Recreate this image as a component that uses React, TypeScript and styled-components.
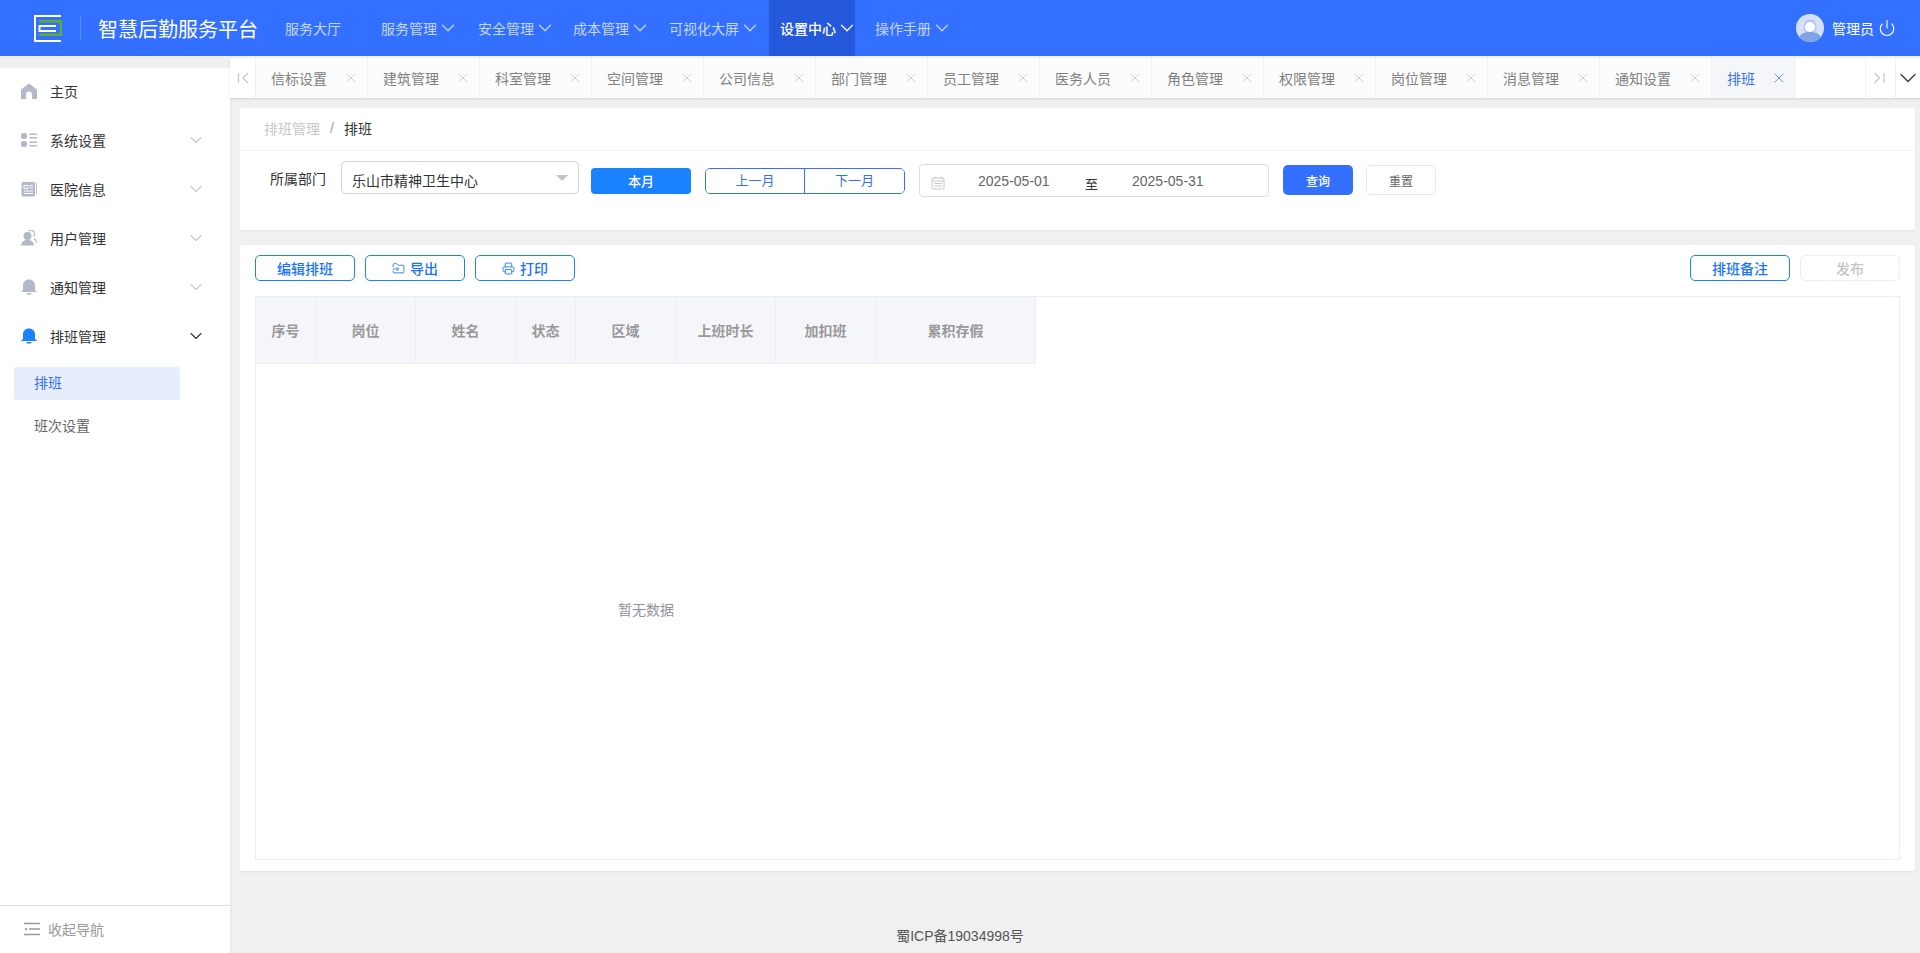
import React from "react";
import styled, { createGlobalStyle } from "styled-components";
import { ChevronDown, X, Power, FolderInput, Printer } from "lucide-react";

const FONT = `"Liberation Sans", "Noto Sans CJK SC", sans-serif`;

const Global = createGlobalStyle`
  html, body { margin: 0; padding: 0; height: 100%; background: #f0f0f0; overflow: hidden; }
  #root { height: 100%; }
  * { box-sizing: border-box; }
  body { font-family: ${FONT}; }
`;

const Page = styled.div`
  display: flex;
  flex-direction: column;
  height: 953px;
  width: 1920px;
  overflow: hidden;
`;

/* ---------- Header ---------- */
const Header = styled.header`
  height: 56px;
  flex: none;
  background: #3370ff;
  display: flex;
  align-items: stretch;
  color: #fff;
  padding-left: 34px;
  padding-right: 24px;
`;
const LogoBox = styled.div`
  display: flex;
  align-items: center;
  width: 46px;
`;
const Divider = styled.div`
  width: 1px;
  height: 24px;
  align-self: center;
  background: rgba(255, 255, 255, 0.18);
  margin-right: 17px;
`;
const Title = styled.div`
  font-size: 20px;
  line-height: 56px;
  width: 176px;
  white-space: nowrap;
  padding-top: 2px;
`;
const Nav = styled.nav`
  display: flex;
  align-items: stretch;
`;
const NavItem = styled.div<{ $active?: boolean; $w: number; $pl?: number }>`
  width: ${(p) => p.$w}px;
  display: flex;
  align-items: center;
  padding-left: ${(p) => p.$pl ?? 11}px;
  padding-bottom: 1px;
  font-size: 14px;
  white-space: nowrap;
  color: ${(p) => (p.$active ? "#fff" : "rgba(255,255,255,0.72)")};
  font-weight: ${(p) => (p.$active ? 500 : 400)};
  background: ${(p) => (p.$active ? "#2559dc" : "transparent")};
  svg { flex: none; }
`;
const User = styled.div`
  margin-left: auto;
  display: flex;
  align-items: center;
  font-size: 14px;
`;
const Avatar = styled.div`
  width: 28px;
  height: 28px;
  margin-right: 8px;
`;
const UserName = styled.span`
  margin-right: 4px;
`;

/* ---------- Body ---------- */
const Body = styled.div`
  flex: 1;
  display: flex;
  min-height: 0;
`;
const SidebarWrap = styled.div`
  width: 230px;
  flex: none;
  padding-top: 12px;
  display: flex;
  box-shadow: 1px 0 2px rgba(0, 0, 0, 0.05);
`;
const Sidebar = styled.aside`
  flex: 1;
  background: #fff;
  display: flex;
  flex-direction: column;
`;
const Menu = styled.div`
  flex: 1;
`;
const MenuItem = styled.div`
  height: 49px;
  display: flex;
  align-items: center;
  padding: 0 24px 4px 21px;
  font-size: 14px;
  color: #333;
`;
const MenuIcon = styled.span`
  width: 16px;
  height: 16px;
  margin-right: 13px;
  display: flex;
`;
const MenuArrow = styled.span<{ $open?: boolean }>`
  margin-left: auto;
  display: flex;
  color: ${(p) => (p.$open ? "#333" : "#c8c9cc")};
`;
const SubList = styled.div`
  padding: 5px 0 0 14px;
`;
const SubItem = styled.div<{ $active?: boolean }>`
  width: 166px;
  height: 33px;
  line-height: 33px;
  margin-bottom: 10px;
  padding-left: 20px;
  font-size: 14px;
  border-radius: 3px;
  color: ${(p) => (p.$active ? "#3370ff" : "#666")};
  background: ${(p) => (p.$active ? "#e6edfd" : "transparent")};
`;
const Collapse = styled.div`
  height: 48px;
  flex: none;
  border-top: 1px solid #dedede;
  display: flex;
  align-items: center;
  padding-left: 24px;
  padding-bottom: 1px;
  font-size: 14px;
  color: #999;
  gap: 8px;
`;

/* ---------- Main ---------- */
const Main = styled.main`
  flex: 1;
  min-width: 0;
  display: flex;
  flex-direction: column;
  padding-top: 2px;
`;
const TabBar = styled.div`
  height: 40px;
  flex: none;
  display: flex;
  background: #fff;
  box-shadow: 0 1px 2px rgba(0, 0, 0, 0.12);
`;
const TabArrow = styled.div<{ $w: number; $dark?: boolean; $left?: boolean }>`
  width: ${(p) => p.$w}px;
  flex: none;
  display: flex;
  align-items: center;
  justify-content: center;
  background: #fff;
  color: ${(p) => (p.$dark ? "#333" : "#c4c4c4")};
  border-left: ${(p) => (p.$left ? "1px solid #f0f0f0" : "none")};
  svg { flex: none; }
`;
const Tab = styled.div<{ $active?: boolean }>`
  width: ${(p) => (p.$active ? 85 : 112)}px;
  flex: none;
  display: flex;
  align-items: center;
  padding-left: 15px;
  border-left: 1px solid #f0f0f0;
  font-size: 14px;
  white-space: nowrap;
  background: ${(p) => (p.$active ? "#f5f6f7" : "#fcfcfc")};
  color: ${(p) => (p.$active ? "#3370ff" : "#808080")};
  svg { margin-left: 16px; color: ${(p) => (p.$active ? "#3370ff" : "#c4c4c4")}; flex: none; }
`;
const TabSpace = styled.div`
  flex: 1;
  background: #fff;
`;
const Content = styled.div`
  padding: 10px 5px 0 10px;
  display: flex;
  flex-direction: column;
  gap: 15px;
`;
const Card = styled.section<{ $h: number }>`
  height: ${(p) => p.$h}px;
  background: #fff;
  border-radius: 3px;
  box-shadow: 0 1px 2px rgba(0, 0, 0, 0.06);
`;
const Crumbs = styled.div`
  height: 43px;
  border-bottom: 1px solid #f0f0f0;
  display: flex;
  align-items: center;
  padding: 0 0 2px 24px;
  font-size: 14px;
  color: #333;
`;
const CrumbLink = styled.span`
  color: #c8c8c8;
`;
const CrumbSep = styled.span`
  color: #999;
  margin: 0 10px;
`;
const Filters = styled.div`
  display: flex;
  align-items: flex-start;
  padding-left: 30px;
  padding-top: 10px;
`;
const Label = styled.div`
  font-size: 14px;
  color: #333;
  width: 71px;
  line-height: 37px;
`;
const SelectBox = styled.div`
  width: 238px;
  height: 33px;
  border: 1px solid #d4d4d8;
  border-radius: 5px;
  display: flex;
  align-items: center;
  padding: 4px 10px 0;
  font-size: 14px;
  color: #333;
  margin-right: 12px;
  justify-content: space-between;
`;
const Caret = styled.span`
  width: 0;
  height: 0;
  border-left: 6px solid transparent;
  border-right: 6px solid transparent;
  border-top: 6px solid #c4c4c4;
  margin-bottom: 4px;
`;
const MonthBtn = styled.button`
  width: 100px;
  height: 26px;
  margin-top: 7px;
  margin-right: 14px;
  border: 0;
  border-radius: 4px;
  background: #1a81ff;
  color: #fff;
  font: 500 13px ${FONT};
  padding: 0 0 2px;
`;
const BtnGroup = styled.div`
  width: 200px;
  height: 26px;
  margin-top: 7px;
  margin-right: 14px;
  display: flex;
  border: 1px solid #3370ff;
  border-radius: 5px;
  overflow: hidden;
`;
const GroupBtn = styled.button<{ $first?: boolean }>`
  flex: ${(p) => (p.$first ? "0 0 98px" : "1")};
  border: 0;
  background: #fff;
  color: #3370ff;
  font: 400 13px ${FONT};
  padding: 0 0 3px;
  border-left: ${(p) => (p.$first ? "0" : "1px solid #3370ff")};
`;
const DateBox = styled.div`
  width: 350px;
  height: 33px;
  margin-top: 3px;
  margin-right: 14px;
  border: 1px solid #dcdde3;
  border-radius: 4px;
  display: flex;
  align-items: center;
  font-size: 14px;
  color: #666;
  padding: 0 0 0 11px;
`;
const DateText = styled.span<{ $w: number }>`
  width: ${(p) => p.$w}px;
  flex: none;
  white-space: nowrap;
`;
const DateIcon = styled.span`
  display: flex;
  width: 47px;
  padding-top: 5px;
  flex: none;
`;
const DateTo = styled.span`
  width: 47px;
  flex: none;
  font-size: 13px;
  color: #333;
  padding-top: 5px;
`;
const QueryBtn = styled.button`
  width: 70px;
  height: 30px;
  margin-top: 4px;
  margin-right: 13px;
  border: 0;
  border-radius: 5px;
  background: #3370ff;
  color: #fff;
  font: 500 12px ${FONT};
  padding: 0;
`;
const ResetBtn = styled.button`
  width: 70px;
  height: 30px;
  margin-top: 4px;
  border: 1px solid #e8e8ea;
  border-radius: 5px;
  background: #fff;
  color: #666;
  font: 400 12px ${FONT};
  padding: 0;
`;
const Toolbar = styled.div`
  height: 51px;
  display: flex;
  padding: 10px 15px 0;
  gap: 10px;
`;
const ToolBtn = styled.button<{ $disabled?: boolean }>`
  width: 100px;
  height: 26px;
  display: flex;
  align-items: center;
  justify-content: center;
  gap: 5px;
  background: #fff;
  border-radius: 5px;
  border: 1px solid ${(p) => (p.$disabled ? "#eceef5" : "#1a81ff")};
  color: ${(p) => (p.$disabled ? "#c4c4c4" : "#1a73ff")};
  font: 500 14px ${FONT};
  padding: 0;
`;
const Spacer = styled.div`
  flex: 1;
`;
const TableWrap = styled.div`
  margin: 0 15px;
  height: 564px;
  border: 1px solid #eceef5;
  display: flex;
  flex-direction: column;
`;
const THead = styled.div`
  display: flex;
  height: 67px;
  flex: none;
`;
const Th = styled.div<{ $w: number }>`
  width: ${(p) => p.$w}px;
  flex: none;
  display: flex;
  align-items: center;
  justify-content: center;
  background: #f4f6fa;
  border-right: 1px solid #eceef5;
  border-bottom: 1px solid #eceef5;
  font-size: 14px;
  font-weight: 700;
  color: #999;
`;
const Empty = styled.div`
  width: 780px;
  flex: 1;
  display: flex;
  align-items: center;
  justify-content: center;
  padding-bottom: 5px;
  font-size: 14px;
  color: #909399;
`;
const Footer = styled.footer`
  margin-top: auto;
  padding-right: 230px;
  padding-bottom: 8px;
  text-align: center;
  font-size: 14px;
  color: #555;
`;

/* ---------- Drawings ---------- */
const Logo = () => (
  <svg width="28" height="28" viewBox="0 0 28 28">
    <path d="M27 2H1v25h26" fill="none" stroke="#fff" strokeWidth="2" />
    <path d="M5 7.200h22v13.600H5" fill="none" stroke="#5fae2e" strokeWidth="2.400" />
    <path d="M22 12H5.500v5H22" fill="none" stroke="#fff" strokeWidth="2" />
  </svg>
);
const AvatarIcon = () => (
  <svg width="28" height="28" viewBox="0 0 28 28">
    <circle cx="14" cy="14" r="14" fill="#d4e1f9" />
    <path d="M3.500 23.300c1-3.600 5-5.300 10.500-5.300s9.500 1.700 10.500 5.300A14 14 0 0 1 14 28a14 14 0 0 1-10.500-4.700z" fill="#7fa4e6" />
    <path d="M7.500 13c0-4.500 2.700-7.500 6.500-7.500s6.500 3 6.500 7.500c0 2.300-.6 4-1.500 5H9c-.9-1-1.500-2.700-1.500-5z" fill="#b0c8f2" />
    <circle cx="14" cy="13" r="5" fill="#fff" />
  </svg>
);
const G = "#b4b8c8";
const HomeIcon = () => (
  <svg width="16" height="16" viewBox="0 0 16 16" fill={G}>
    <path d="M8 .5 16 6.500V16h-5v-4.500a3 3 0 0 0-6 0V16H0V6.500z" />
  </svg>
);
const GridIcon = () => (
  <svg width="16" height="16" viewBox="0 0 16 16" fill={G}>
    <rect x="0" y="1" width="6" height="6" rx="2" />
    <rect x="0" y="9" width="6" height="6" rx="2.500" />
    <path d="M8.500 1.500H16V3H8.500zM8.500 5H16v1.500H8.500zM8.500 9.500H16V11H8.500zM8.500 13H16v1.500H8.500z" />
  </svg>
);
const NewsIcon = () => (
  <svg width="16" height="16" viewBox="0 0 16 16">
    <rect x="0.500" y="1" width="13.500" height="14.500" rx="1.500" fill={G} />
    <path d="M14.800 1.500c.5.300.8.800.8 1.500v10" fill="none" stroke={G} strokeWidth="1" />
    <path d="M3 4.500h4v3H3zM8.500 4.500H12M8.500 7H12M3 10h9M3 12.500h9" stroke="#fff" strokeWidth="1" fill="none" />
  </svg>
);
const UsersIcon = () => (
  <svg width="16" height="16" viewBox="0 0 16 16">
    <path d="M7.500 1.200a3.600 3.600 0 0 1 6 2.800c0 1-.4 1.900-1 2.500M13 8.500c1.500.8 2.300 2.200 2.500 4" fill="none" stroke={G} strokeWidth="1.200" />
    <circle cx="6.500" cy="6" r="4" fill={G} />
    <path d="M0 15.500c.2-3.500 2.800-5.500 6.500-5.500s6.300 2 6.500 5.500z" fill={G} />
  </svg>
);
const BellIcon = ({ c }: { c: string }) => (
  <svg width="16" height="16" viewBox="0 0 16 16" fill={c}>
    <path d="M8 .5c3.500 0 6 2.500 6 6v4c0 .8.500 1.300 1.200 1.500.5.200.8.500.8 1H0c0-.5.300-.8.800-1 .7-.2 1.200-.7 1.200-1.500v-4c0-3.500 2.500-6 6-6z" />
    <rect x="5.500" y="14" width="5" height="1.500" rx=".7" />
  </svg>
);
const CalIcon = () => (
  <svg width="14" height="14" viewBox="0 0 14 14" fill="none" stroke="#c4c8d0">
    <rect x="1" y="2" width="12" height="11" rx="1" />
    <path d="M1 5h12M4 .5V3M10 .5V3M3 7.500h8M3 10h8" />
  </svg>
);
const FirstIcon = () => (
  <svg width="14" height="14" viewBox="0 0 14 14" fill="none" stroke="currentColor" strokeWidth="1.200">
    <path d="M2.500 2v10M12 2 7 7l5 5" />
  </svg>
);
const LastIcon = () => (
  <svg width="14" height="14" viewBox="0 0 14 14" fill="none" stroke="currentColor" strokeWidth="1.200">
    <path d="M10 2v10M.5 2l5 5-5 5" />
  </svg>
);
const CollapseIcon = () => (
  <svg width="16" height="14" viewBox="0 0 16 14" fill="none" stroke="#999" strokeWidth="1.400">
    <path d="M0 1.500h16M5 7h11M0 12.500h16" />
    <path d="M3 5.200v3.600L.5 7z" fill="#999" stroke="none" />
  </svg>
);

const NAV: { t: string; w: number; a?: boolean; active?: boolean; pl?: number }[] = [
  { t: "服务大厅", w: 96 },
  { t: "服务管理", w: 97, a: true },
  { t: "安全管理", w: 95, a: true },
  { t: "成本管理", w: 96, a: true },
  { t: "可视化大屏", w: 111, a: true },
  { t: "设置中心", w: 86, a: true, active: true },
  { t: "操作手册", w: 110, a: true, pl: 20 },
];
const TABS = ["信标设置", "建筑管理", "科室管理", "空间管理", "公司信息", "部门管理", "员工管理", "医务人员", "角色管理", "权限管理", "岗位管理", "消息管理", "通知设置"];
const MENU = [
  { t: "主页", i: <HomeIcon /> },
  { t: "系统设置", i: <GridIcon />, a: true },
  { t: "医院信息", i: <NewsIcon />, a: true },
  { t: "用户管理", i: <UsersIcon />, a: true },
  { t: "通知管理", i: <BellIcon c={G} />, a: true },
  { t: "排班管理", i: <BellIcon c="#1a81ff" />, a: true, open: true },
];
const COLS = [
  { t: "序号", w: 60 },
  { t: "岗位", w: 100 },
  { t: "姓名", w: 100 },
  { t: "状态", w: 60 },
  { t: "区域", w: 100 },
  { t: "上班时长", w: 100 },
  { t: "加扣班", w: 100 },
  { t: "累积存假", w: 160 },
];

export default function App() {
  return (
    <Page>
      <Global />
      <Header>
        <LogoBox>
          <Logo />
        </LogoBox>
        <Divider />
        <Title>智慧后勤服务平台</Title>
        <Nav>
          {NAV.map((n) => (
            <NavItem key={n.t} $w={n.w} $active={n.active} $pl={n.pl}>
              {n.t}
              {n.a && <ChevronDown size={22} strokeWidth={1.3} />}
            </NavItem>
          ))}
        </Nav>
        <User>
          <Avatar>
            <AvatarIcon />
          </Avatar>
          <UserName>管理员</UserName>
          <Power size={18} strokeWidth={1.5} />
        </User>
      </Header>
      <Body>
        <SidebarWrap>
          <Sidebar>
            <Menu>
              {MENU.map((m) => (
                <MenuItem key={m.t}>
                  <MenuIcon>{m.i}</MenuIcon>
                  {m.t}
                  {m.a && (
                    <MenuArrow $open={m.open}>
                      <ChevronDown size={20} strokeWidth={1.3} />
                    </MenuArrow>
                  )}
                </MenuItem>
              ))}
              <SubList>
                <SubItem $active>排班</SubItem>
                <SubItem>班次设置</SubItem>
              </SubList>
            </Menu>
            <Collapse>
              <CollapseIcon />
              收起导航
            </Collapse>
          </Sidebar>
        </SidebarWrap>
        <Main>
          <TabBar>
            <TabArrow $w={25}>
              <FirstIcon />
            </TabArrow>
            {TABS.map((t) => (
              <Tab key={t}>
                {t}
                <X size={16} strokeWidth={1.1} />
              </Tab>
            ))}
            <Tab $active>
              排班
              <X size={16} strokeWidth={1.1} />
            </Tab>
            <TabSpace />
            <TabArrow $w={30} $left>
              <LastIcon />
            </TabArrow>
            <TabArrow $w={25} $dark $left>
              <ChevronDown size={28} strokeWidth={1.1} />
            </TabArrow>
          </TabBar>
          <Content>
            <Card $h={122}>
              <Crumbs>
                <CrumbLink>排班管理</CrumbLink>
                <CrumbSep>/</CrumbSep>
                排班
              </Crumbs>
              <Filters>
                <Label>所属部门</Label>
                <SelectBox>
                  乐山市精神卫生中心
                  <Caret />
                </SelectBox>
                <MonthBtn>本月</MonthBtn>
                <BtnGroup>
                  <GroupBtn $first>上一月</GroupBtn>
                  <GroupBtn>下一月</GroupBtn>
                </BtnGroup>
                <DateBox>
                  <DateIcon>
                    <CalIcon />
                  </DateIcon>
                  <DateText $w={107}>2025-05-01</DateText>
                  <DateTo>至</DateTo>
                  <DateText $w={90}>2025-05-31</DateText>
                </DateBox>
                <QueryBtn>查询</QueryBtn>
                <ResetBtn>重置</ResetBtn>
              </Filters>
            </Card>
            <Card $h={626}>
              <Toolbar>
                <ToolBtn>编辑排班</ToolBtn>
                <ToolBtn>
                  <FolderInput size={13} strokeWidth={1.6} />
                  导出
                </ToolBtn>
                <ToolBtn>
                  <Printer size={13} strokeWidth={1.6} />
                  打印
                </ToolBtn>
                <Spacer />
                <ToolBtn>排班备注</ToolBtn>
                <ToolBtn $disabled>发布</ToolBtn>
              </Toolbar>
              <TableWrap>
                <THead>
                  {COLS.map((c) => (
                    <Th key={c.t} $w={c.w}>
                      {c.t}
                    </Th>
                  ))}
                </THead>
                <Empty>暂无数据</Empty>
              </TableWrap>
            </Card>
          </Content>
          <Footer>蜀ICP备19034998号</Footer>
        </Main>
      </Body>
    </Page>
  );
}
